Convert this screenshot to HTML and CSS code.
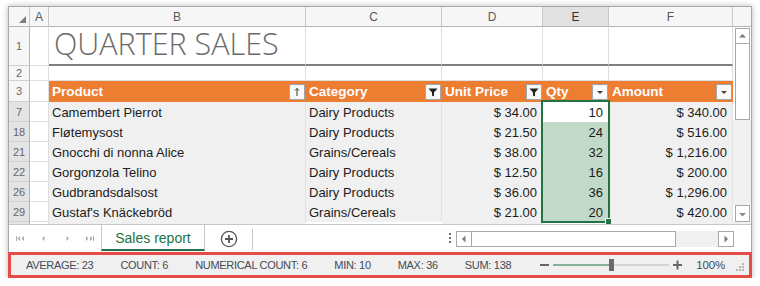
FILE: index.html
```html
<!DOCTYPE html>
<html>
<head>
<meta charset="utf-8">
<link rel="stylesheet" href="styles.css">
</head>
<body>
<div class="window">
  <div class="main">
    <div class="sheet">
      <div class="grid">
        <div class="ch corner"><span class="tri"></span></div>
        <div class="ch">A</div>
        <div class="ch">B</div>
        <div class="ch">C</div>
        <div class="ch">D</div>
        <div class="ch sel">E</div>
        <div class="ch">F</div>

        <div class="rh">1</div>
        <div class="c"></div>
        <div class="c title">QUARTER SALES</div>
        <div class="c thick"></div>
        <div class="c thick"></div>
        <div class="c thick"></div>
        <div class="c thick"></div>

        <div class="rh">2</div>
        <div class="c"></div>
        <div class="c"></div>
        <div class="c"></div>
        <div class="c"></div>
        <div class="c"></div>
        <div class="c"></div>

        <div class="rh">3</div>
        <div class="c"></div>
        <div class="th">Product<span class="fb"><svg width="14" height="14" viewBox="0 0 14 14"><path d="M7 3.5V11M5 5.5L7 3.5L9 5.5" fill="none" stroke="#333" stroke-width="1"/></svg></span></div>
        <div class="th">Category<span class="fb"><svg width="14" height="14" viewBox="0 0 14 14"><path d="M2.5 3.5H11.5L8 7.5V11.5L6 10.5V7.5Z" fill="#222"/></svg></span></div>
        <div class="th">Unit Price<span class="fb"><svg width="14" height="14" viewBox="0 0 14 14"><path d="M2.5 3.5H11.5L8 7.5V11.5L6 10.5V7.5Z" fill="#222"/></svg></span></div>
        <div class="th">Qty<span class="fb"><svg width="14" height="14" viewBox="0 0 14 14"><path d="M4 6H10L7 9Z" fill="#444"/></svg></span></div>
        <div class="th">Amount<span class="fb"><svg width="14" height="14" viewBox="0 0 14 14"><path d="M4 6H10L7 9Z" fill="#444"/></svg></span></div>

        <div class="rh rs">7</div>
        <div class="c"></div>
        <div class="d">Camembert Pierrot</div>
        <div class="d">Dairy Products</div>
        <div class="d num">$ 34.00</div>
        <div class="d num active">10</div>
        <div class="d num">$ 340.00</div>

        <div class="rh rs">18</div>
        <div class="c"></div>
        <div class="d">Fløtemysost</div>
        <div class="d">Dairy Products</div>
        <div class="d num">$ 21.50</div>
        <div class="d num qs">24</div>
        <div class="d num">$ 516.00</div>

        <div class="rh rs">21</div>
        <div class="c"></div>
        <div class="d">Gnocchi di nonna Alice</div>
        <div class="d">Grains/Cereals</div>
        <div class="d num">$ 38.00</div>
        <div class="d num qs">32</div>
        <div class="d num">$ 1,216.00</div>

        <div class="rh rs">22</div>
        <div class="c"></div>
        <div class="d">Gorgonzola Telino</div>
        <div class="d">Dairy Products</div>
        <div class="d num">$ 12.50</div>
        <div class="d num qs">16</div>
        <div class="d num">$ 200.00</div>

        <div class="rh rs">26</div>
        <div class="c"></div>
        <div class="d">Gudbrandsdalsost</div>
        <div class="d">Dairy Products</div>
        <div class="d num">$ 36.00</div>
        <div class="d num qs">36</div>
        <div class="d num">$ 1,296.00</div>

        <div class="rh rs">29</div>
        <div class="c"></div>
        <div class="d">Gustaf's Knäckebröd</div>
        <div class="d">Grains/Cereals</div>
        <div class="d num">$ 21.00</div>
        <div class="d num qs">20</div>
        <div class="d num">$ 420.00</div>

        <div class="rh part"></div>
        <div class="c part"></div>
        <div class="p"></div>
        <div class="p white"></div>
        <div class="p"></div>
        <div class="p white"></div>
        <div class="p"></div>

        <div class="selection"><span class="handle"></span></div>
      </div>
      <div class="vscroll">
        <div class="vs-head"></div>
        <div class="sbtn vup"><svg width="13" height="14" viewBox="0 0 13 14"><path d="M3 8.5H10L6.5 5Z" fill="#7a7a7a"/></svg></div>
        <div class="vthumb"></div>
        <div class="vtrack"></div>
        <div class="sbtn vdown"><svg width="13" height="14" viewBox="0 0 13 14"><path d="M3 6H10L6.5 9.5Z" fill="#8a8a8a"/></svg></div>
      </div>
    </div>
    <div class="tabbar">
      <div class="nav">
        <svg width="92" height="27" viewBox="0 0 92 27">
          <g fill="#aaaaaa">
            <rect x="7" y="11" width="1" height="5"/>
            <path d="M11 11V16L8.5 13.5Z"/>
            <path d="M15 11V16L12.5 13.5Z"/>
            <path d="M35.5 11V16L33 13.5Z"/>
            <path d="M57.5 11V16L60 13.5Z"/>
            <path d="M77 11V16L79.5 13.5Z"/>
            <path d="M81 11V16L83.5 13.5Z"/>
            <rect x="84" y="11" width="1" height="5"/>
          </g>
        </svg>
      </div>
      <div class="tab">Sales report</div>
      <div class="addarea">
        <svg width="18" height="18" viewBox="0 0 18 18"><circle cx="9" cy="9" r="7.6" fill="none" stroke="#555" stroke-width="1.3"/><path d="M9 5V13M5 9H13" stroke="#555" stroke-width="1.8"/></svg>
      </div>
      <div class="tsep"></div>
      <div class="spacer"></div>
      <div class="grip"><i></i><i></i><i></i></div>
      <div class="hscroll">
        <div class="sbtn hl"><svg width="14" height="14" viewBox="0 0 14 14"><path d="M8.5 3.5V10.5L5 7Z" fill="#7a7a7a"/></svg></div>
        <div class="hthumb"></div>
        <div class="htrack"></div>
        <div class="sbtn hr"><svg width="14" height="14" viewBox="0 0 14 14"><path d="M5.5 3.5V10.5L9 7Z" fill="#7a7a7a"/></svg></div>
      </div>
    </div>
  </div>
  <div class="status">
    <span class="st">AVERAGE: 23</span>
    <span class="st">COUNT: 6</span>
    <span class="st">NUMERICAL COUNT: 6</span>
    <span class="st">MIN: 10</span>
    <span class="st">MAX: 36</span>
    <span class="st">SUM: 138</span>
    <svg class="zoom" width="146" height="20" viewBox="0 0 146 20">
      <rect x="2" y="9" width="9" height="2" fill="#666"/>
      <rect x="15" y="9.5" width="57" height="1" fill="#217346"/>
      <rect x="71" y="9.5" width="60" height="1" fill="#b8b8b8"/>
      <rect x="71" y="4" width="5" height="12" fill="#6a6a6a"/>
      <rect x="135" y="9" width="9" height="2" fill="#666"/>
      <rect x="138.5" y="5.5" width="2" height="9" fill="#666"/>
    </svg>
    <span class="pct">100%</span>
    <svg class="rgrip" width="10" height="10" viewBox="0 0 10 10">
      <g fill="#b5b5b5">
        <rect x="7" y="1" width="2" height="2"/>
        <rect x="4" y="4" width="2" height="2"/>
        <rect x="7" y="4" width="2" height="2"/>
        <rect x="1" y="7" width="2" height="2"/>
        <rect x="4" y="7" width="2" height="2"/>
        <rect x="7" y="7" width="2" height="2"/>
      </g>
    </svg>
  </div>
</div>
</body>
</html>
```

FILE: styles.css
```css
body {
  margin: 0;
  background: #ffffff;
  font-family: "Liberation Sans", Arial, sans-serif;
}

.window {
  margin: 6px 0 0 8px;
  width: 744px;
  box-shadow: 0 0 6px rgba(0, 0, 0, 0.28);
}

.main {
  border: 1px solid #a8a8a8;
  border-bottom: 0;
  background: #ffffff;
}

.sheet {
  display: flex;
}

.grid {
  position: relative;
  display: grid;
  grid-template-columns: 21px 19px 257px 136px 101px 66px 124px;
  grid-template-rows: 20px 39px 15px 21px repeat(6, 20px) 2px;
}

.grid > div {
  box-sizing: border-box;
  min-width: 0;
}

.ch {
  background: #f6f6f6;
  border-right: 1px solid #c9c9c9;
  border-bottom: 1px solid #b4b4b4;
  font-size: 12px;
  line-height: 12px;
  color: #5a5a5a;
  display: flex;
  align-items: center;
  justify-content: center;
}

.ch.sel {
  background: #e1e1e1;
  color: #333;
}

.corner {
  position: relative;
}

.tri {
  position: absolute;
  right: 3px;
  bottom: 3px;
  width: 0;
  height: 0;
  border-left: 7px solid transparent;
  border-bottom: 7px solid #7d7d7d;
}

.rh {
  background: #f6f6f6;
  border-right: 1px solid #b4b4b4;
  border-bottom: 1px solid #d0d0d0;
  font-size: 11px;
  color: #666;
  display: flex;
  align-items: center;
  justify-content: center;
}

.rh.rs {
  background: #e4e4e4;
}

.rh.part {
  border-bottom: 0;
  background: #e4e4e4;
}

.c {
  border-right: 1px solid #dedede;
  border-bottom: 1px solid #dedede;
}

.c.part {
  border-bottom: 0;
}

.title {
  font-family: "Open Sans", "Liberation Sans", sans-serif;
  font-weight: 300;
  font-size: 30.5px;
  line-height: 30px;
  padding-top: 1px;
  color: #6b6b6b;
  padding-left: 5px;
  white-space: nowrap;
  border-bottom: 2px solid #7f7f7f !important;
}

.thick {
  border-bottom: 2px solid #7f7f7f;
}

.th {
  background: #ed7d31;
  color: #ffffff;
  font-weight: bold;
  font-size: 13.5px;
  display: flex;
  align-items: center;
  justify-content: space-between;
  padding: 0 1px 0 3px;
  white-space: nowrap;
}

.fb {
  width: 16px;
  height: 16px;
  box-sizing: border-box;
  border: 1px solid #a5a5a5;
  background: #f9f9f9;
  display: flex;
  align-items: center;
  justify-content: center;
}

.d {
  background: #f0f0f0;
  border-right: 1px solid #e2e2e2;
  font-size: 13px;
  color: #1c1c1c;
  display: flex;
  align-items: center;
  padding: 0 4px 0 3px;
  white-space: nowrap;
}

.d.num {
  justify-content: flex-end;
  padding-right: 5px;
}

.d.qs {
  background: #c3d9ca;
}

.d.active {
  background: #ffffff;
}

.p {
  background: #f0f0f0;
}

.p.white {
  background: #ffffff;
}

.selection {
  position: absolute;
  left: 532px;
  top: 93px;
  width: 69px;
  height: 123px;
  border: 2px solid #217346;
  box-sizing: border-box;
  pointer-events: none;
}

.handle {
  position: absolute;
  right: -3px;
  bottom: -3px;
  width: 5px;
  height: 5px;
  background: #217346;
  border: 1px solid #ffffff;
  border-right: 0;
  border-bottom: 0;
}

.vscroll {
  width: 18px;
  display: flex;
  flex-direction: column;
  background: #ffffff;
}

.vs-head {
  height: 20px;
  box-sizing: border-box;
  background: #f6f6f6;
  border-bottom: 1px solid #b4b4b4;
}

.sbtn {
  box-sizing: border-box;
  border: 1px solid #a8a8a8;
  background: #ffffff;
  display: flex;
  align-items: center;
  justify-content: center;
}

.vup {
  height: 16px;
  margin: 1px 1px 0 2px;
}

.vthumb {
  height: 76px;
  margin: 0 1px 0 2px;
  box-sizing: border-box;
  border: 1px solid #a8a8a8;
  border-top: 0;
  background: #ffffff;
}

.vtrack {
  flex: 1;
  background: #f0f0f0;
}

.vdown {
  height: 17px;
  margin: 0 1px 0 2px;
}

.vscroll::after {
  content: "";
  height: 2px;
  background: #f0f0f0;
}

.tabbar {
  height: 28px;
  box-sizing: border-box;
  border-top: 1px solid #c6c6c6;
  display: flex;
  background: #ffffff;
}

.nav {
  width: 92px;
  display: flex;
}

.tab {
  width: 104px;
  box-sizing: border-box;
  border-left: 1px solid #c6c6c6;
  border-right: 1px solid #c6c6c6;
  border-bottom: 2px solid #217346;
  margin-bottom: 1px;
  color: #217346;
  font-size: 14px;
  display: flex;
  align-items: center;
  justify-content: center;
  padding-top: 1px;
}

.addarea {
  width: 47px;
  display: flex;
  align-items: center;
  justify-content: center;
  padding-top: 1px;
}

.tsep {
  width: 1px;
  height: 21px;
  margin-top: 4px;
  background: #c6c6c6;
}

.spacer {
  flex: 1;
}

.grip {
  width: 2px;
  margin-right: 5px;
  display: flex;
  flex-direction: column;
  justify-content: center;
  gap: 2px;
  padding-bottom: 1px;
}

.grip i {
  display: block;
  width: 2px;
  height: 2px;
  background: #6d6d6d;
}

.hscroll {
  width: 278px;
  margin-right: 17px;
  height: 16px;
  margin-top: 6px;
  display: flex;
}

.hl, .hr {
  width: 16px;
  height: 16px;
}

.hthumb {
  width: 204px;
  box-sizing: border-box;
  border: 1px solid #a8a8a8;
  border-left: 0;
  background: #ffffff;
}

.htrack {
  flex: 1;
  background: #f0f0f0;
}

.status {
  height: 26px;
  box-sizing: border-box;
  border: 3px solid #e54b47;
  background: #f0f0f0;
  display: flex;
  align-items: center;
  padding-left: 15px;
}

.st {
  font-size: 11px;
  letter-spacing: -0.3px;
  color: #464a55;
  margin-right: 27px;
  white-space: nowrap;
}

.zoom {
  display: block;
  margin-left: 0;
}

.pct {
  font-size: 11.5px;
  color: #464a55;
  margin-left: 12px;
  letter-spacing: -0.2px;
}

.rgrip {
  display: block;
  margin-left: 10px;
  margin-top: 4px;
}
```
